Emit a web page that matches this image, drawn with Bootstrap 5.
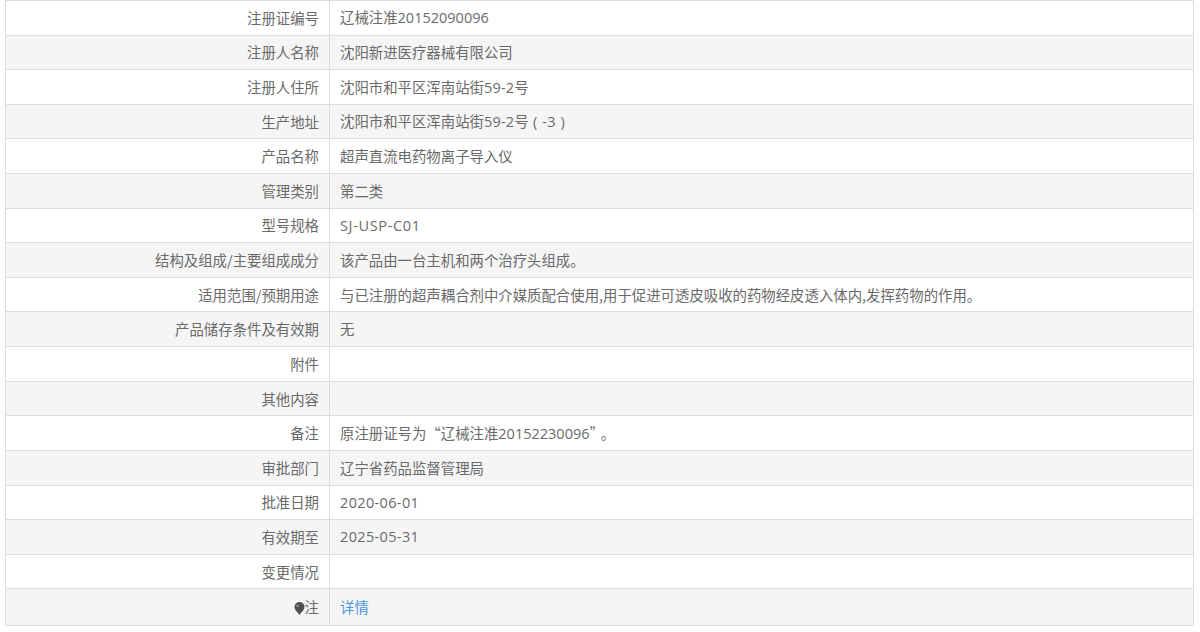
<!doctype html>
<html lang="zh">
<head>
<meta charset="utf-8">
<link href="https://cdn.jsdelivr.net/npm/bootstrap@5.3.0/dist/css/bootstrap.min.css" rel="stylesheet">
<style>
html,body{background:#fff;height:632px;overflow:hidden}
.sheet-wrap{padding:0 6px 0 5px}
.sheet{font-family:"Noto Sans CJK SC","Liberation Sans",sans-serif;font-size:14.4px;table-layout:fixed;width:100%;margin:0;border-collapse:collapse;--bs-table-bg:transparent;--bs-table-color:#6a6a6a;--bs-table-border-color:#ddd}
.sheet tr{height:34.62px}
.sheet tr.tail{height:37px}
.sheet tr:nth-child(even)>*{background-color:#f5f5f5}
.sheet th,.sheet td{padding:0 10px;vertical-align:middle;font-weight:400;border:1px solid #ddd;line-height:20px;color:#6a6a6a}
.sheet th{width:324px;text-align:right}
.lat{font-family:"Open Sans","Liberation Sans",sans-serif;font-size:14.5px}
.lat-date{letter-spacing:.2px}
.lat-full{letter-spacing:.35px}
.lat-code{letter-spacing:.65px}
.lat-paren{letter-spacing:.55px}
.full-stop{margin-left:4px}
.sheet a{color:#4a95dd;text-decoration:none}
.pin{width:11px;height:13px;vertical-align:-2px}
</style>
</head>
<body>
<div class="sheet-wrap">
<table class="table table-bordered sheet">
<tbody>
<tr><th>注册证编号</th><td>辽械注准<span class="lat">20152090096</span></td></tr>
<tr><th>注册人名称</th><td>沈阳新进医疗器械有限公司</td></tr>
<tr><th>注册人住所</th><td>沈阳市和平区浑南站街<span class="lat lat-date">59-2</span>号</td></tr>
<tr><th>生产地址</th><td>沈阳市和平区浑南站街<span class="lat lat-date">59-2</span>号<span class="lat lat-paren">&nbsp;(&nbsp;-3&nbsp;)</span></td></tr>
<tr><th>产品名称</th><td>超声直流电药物离子导入仪</td></tr>
<tr><th>管理类别</th><td>第二类</td></tr>
<tr><th>型号规格</th><td><span class="lat lat-code">SJ-USP-C01</span></td></tr>
<tr><th>结构及组成/主要组成成分</th><td>该产品由一台主机和两个治疗头组成。</td></tr>
<tr><th>适用范围/预期用途</th><td>与已注册的超声耦合剂中介媒质配合使用,用于促进可透皮吸收的药物经皮透入体内,发挥药物的作用。</td></tr>
<tr><th>产品储存条件及有效期</th><td>无</td></tr>
<tr><th>附件</th><td></td></tr>
<tr><th>其他内容</th><td></td></tr>
<tr><th>备注</th><td>原注册证号为“辽械注准<span class="lat">20152230096</span>”<span class="full-stop">。</span></td></tr>
<tr><th>审批部门</th><td>辽宁省药品监督管理局</td></tr>
<tr><th>批准日期</th><td><span class="lat lat-full">2020-06-01</span></td></tr>
<tr><th>有效期至</th><td><span class="lat lat-full">2025-05-31</span></td></tr>
<tr><th>变更情况</th><td></td></tr>
<tr class="tail"><th><svg class="pin" viewBox="0 0 11 13" aria-hidden="true"><path fill="#4f4f4f" d="M5.500 13C4 10.500.5 8 .5 5a5 5 0 0 1 10 0c0 3-3.500 5.500-5 8z"/><circle cx="3.500" cy="3.800" r="1.400" fill="#8a8a8a"/></svg>注</th><td><a href="#">详情</a></td></tr>
</tbody>
</table>
</div>
</body>
</html>
